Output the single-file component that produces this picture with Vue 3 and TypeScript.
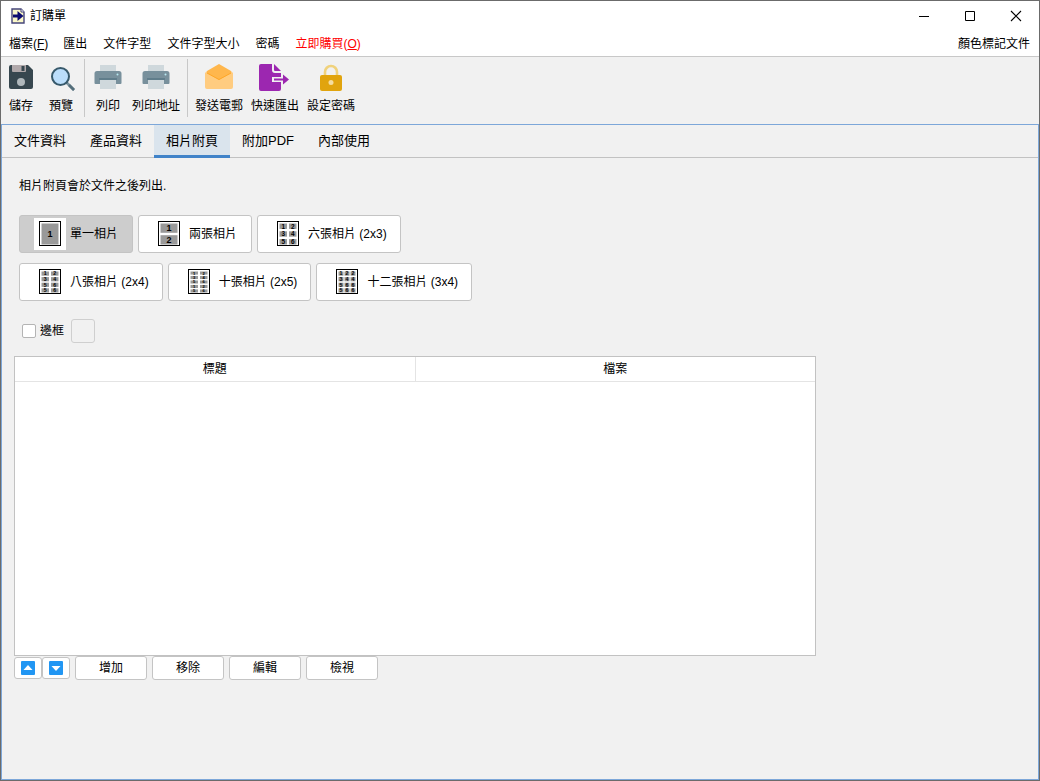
<script setup lang="ts">
import { ref } from 'vue'

interface Layout {
  label: string
  cols: number
  rows: number
  digits: string
}

const layoutRows: Layout[][] = [
  [
    { label: '單一相片', cols: 1, rows: 1, digits: '1' },
    { label: '兩張相片', cols: 1, rows: 2, digits: '12' },
    { label: '六張相片 (2x3)', cols: 2, rows: 3, digits: '123456' },
  ],
  [
    { label: '八張相片 (2x4)', cols: 2, rows: 4, digits: '12345656' },
    { label: '十張相片 (2x5)', cols: 2, rows: 5, digits: '1234561256' },
    { label: '十二張相片 (3x4)', cols: 3, rows: 4, digits: '122344566566' },
  ],
]

const tabs: string[] = ['文件資料', '產品資料', '相片附頁', '附加PDF', '內部使用']
const actions: string[] = ['增加', '移除', '編輯', '檢視']

const activeTab = ref('相片附頁')
const activeLayout = ref('單一相片')
const bordered = ref(false)

function cells(l: Layout) {
  const gapX = l.cols === 1 ? 0 : l.cols === 2 ? 2 : 1
  const gapY = l.rows < 4 ? 2.4 : 1.4
  const w = (17 - gapX * (l.cols - 1)) / l.cols
  const h = (21 - gapY * (l.rows - 1)) / l.rows
  return l.digits.split('').map((digit, i) => ({
    digit,
    x: 7.5 + (i % l.cols) * (w + gapX),
    y: 5.5 + Math.floor(i / l.cols) * (h + gapY),
    w,
    h,
    size: Math.min(9, h + 1),
  }))
}
</script>

<template>
  <div class="window">
    <header class="titlebar">
      <svg class="app-icon" width="14" height="16" viewBox="0 0 14 16">
        <path d="M1 1h9l3 3v11H1z" fill="#fbf8c8" stroke="#45457a" stroke-width="1.4" />
        <path d="M10 1v3h3" fill="#fff" stroke="#45457a" />
        <path d="M2 6.5h4.500V3l6 5-6 5V9.500H2z" fill="#0c0c70" />
      </svg>
      <h1>訂購單</h1>
      <div class="controls">
        <button aria-label="最小化"><svg width="12" height="12"><path d="M1 6.5h10" stroke="#000" /></svg></button>
        <button aria-label="最大化"><svg width="12" height="12"><path d="M1.5 1.5h9v9h-9z" fill="none" stroke="#000" /></svg></button>
        <button aria-label="關閉"><svg width="12" height="12"><path d="M1 1l10 10M11 1L1 11" stroke="#000" stroke-width="1.1" /></svg></button>
      </div>
    </header>

    <nav class="menubar">
      <button>檔案(<u>F</u>)</button>
      <button>匯出</button>
      <button>文件字型</button>
      <button>文件字型大小</button>
      <button>密碼</button>
      <button class="buy">立即購買(<u>O</u>)</button>
      <button class="last">顏色標記文件</button>
    </nav>

    <div class="toolbar">
      <div class="group first">
        <button>
          <svg width="24" height="28" viewBox="0 0 24 28">
            <path d="M2 2h17l5 5v17a2 2 0 0 1-2 2H2a2 2 0 0 1-2-2V4a2 2 0 0 1 2-2z" fill="#37474f" />
            <path d="M3 2h14v6a1 1 0 0 1-1 1H4a1 1 0 0 1-1-1z" fill="#b0a8aa" />
            <path d="M12.500 3h3v5h-3z" fill="#37474f" />
            <circle cx="12" cy="19" r="4" fill="#b0b8bc" />
          </svg>
          <span>儲存</span>
        </button>
        <button>
          <svg width="28" height="28" viewBox="0 0 28 28">
            <path d="M19 19l8 8" stroke="#78909c" stroke-width="2.600" />
            <path d="M22 22l5 5" stroke="#546e7a" stroke-width="2.600" />
            <circle cx="13.500" cy="13.500" r="8.500" fill="#bbdefb" stroke="#37596b" stroke-width="2" />
          </svg>
          <span>預覽</span>
        </button>
      </div>
      <div class="group print">
        <button v-for="name in ['列印', '列印地址']" :key="name">
          <svg width="28" height="28" viewBox="0 0 28 28">
            <path d="M6 2h16v8H6z" fill="#cfd8dc" />
            <path d="M3 8h22a2.500 2.500 0 0 1 2.500 2.500V20a1 1 0 0 1-1 1h-25a1 1 0 0 1-1-1v-9.500A2.500 2.500 0 0 1 3 8z" fill="#78909c" />
            <path d="M6 16h16v10H6z" fill="#cfd8dc" />
            <path d="M5 15h18v2H5z" fill="#607d8b" />
            <circle cx="23.500" cy="11.500" r="1" fill="#b8e8f0" />
          </svg>
          <span>{{ name }}</span>
        </button>
      </div>
      <div class="group send">
        <button>
          <svg width="28" height="28" viewBox="0 0 28 28">
            <path d="M0 10l2-2h24l2 2v14a2 2 0 0 1-2 2H2a2 2 0 0 1-2-2z" fill="#ffcc80" />
            <path d="M14 1l12 7v2l-12 7-12-7V8z" fill="#ffb74d" />
            <path d="M2 10l12 6.500L26 10" fill="none" stroke="#ffa726" />
          </svg>
          <span>發送電郵</span>
        </button>
        <button>
          <svg width="32" height="28" viewBox="0 0 32 28">
            <path d="M2 1h11v6a3 3 0 0 0 3 3h6v4h-9v5h9v7a2 2 0 0 1-2 2H2a2 2 0 0 1-2-2V3a2 2 0 0 1 2-2z" fill="#9c27b0" />
            <path d="M15 1l7 7h-6a1 1 0 0 1-1-1z" fill="#9c27b0" />
            <path d="M15 15.500h9v-4l6 5-6 5v-4h-9z" fill="#9c27b0" />
          </svg>
          <span>快速匯出</span>
        </button>
        <button>
          <svg width="24" height="28" viewBox="0 0 24 28">
            <path d="M6 13V9a6 6 0 0 1 12 0v4" fill="none" stroke="#f0d27c" stroke-width="2.600" />
            <rect x="1" y="12" width="22" height="16" rx="2" fill="#e1a40e" />
            <circle cx="12" cy="19.500" r="2.500" fill="#f5dda0" />
          </svg>
          <span>設定密碼</span>
        </button>
      </div>
    </div>

    <main class="pane">
      <div class="tabs" role="tablist">
        <button
          v-for="tab in tabs"
          :key="tab"
          role="tab"
          :aria-selected="tab === activeTab"
          :class="{ active: tab === activeTab }"
          @click="activeTab = tab"
        >{{ tab }}</button>
      </div>

      <section class="content">
        <p>相片附頁會於文件之後列出.</p>

        <div class="layouts">
          <div v-for="(row, r) in layoutRows" :key="r" class="layout-row">
            <button
              v-for="item in row"
              :key="item.label"
              :class="{ selected: item.label === activeLayout }"
              @click="activeLayout = item.label"
            >
              <svg width="32" height="32" viewBox="0 0 32 32" aria-hidden="true">
                <rect width="32" height="32" fill="#fff" />
                <rect x="5.500" y="3.500" width="21" height="24" fill="#fff" stroke="#000" />
                <g v-for="(c, i) in cells(item)" :key="i">
                  <rect :x="c.x" :y="c.y" :width="c.w" :height="c.h" fill="#999" />
                  <text
                    :x="c.x + c.w / 2"
                    :y="c.y + c.h / 2 + c.size * 0.36"
                    :font-size="c.size"
                    text-anchor="middle"
                  >{{ c.digit }}</text>
                </g>
              </svg>
              <span>{{ item.label }}</span>
            </button>
          </div>
        </div>

        <div class="frame-option">
          <label><input v-model="bordered" type="checkbox" />邊框</label>
          <button class="swatch" aria-label="邊框顏色" disabled></button>
        </div>

        <div class="list">
          <table>
            <thead>
              <tr><th>標題</th><th>檔案</th></tr>
            </thead>
          </table>
        </div>

        <div class="actions">
          <button class="move" aria-label="上移">
            <svg width="14" height="14"><rect width="14" height="14" rx="1" fill="#2196f3" /><path d="M2.500 9L7 4l4.500 5z" fill="#fff" /></svg>
          </button>
          <button class="move" aria-label="下移">
            <svg width="14" height="14"><rect width="14" height="14" rx="1" fill="#2196f3" /><path d="M2.500 5L7 10l4.500-5z" fill="#fff" /></svg>
          </button>
          <div class="edit">
            <button v-for="action in actions" :key="action">{{ action }}</button>
          </div>
        </div>
      </section>
    </main>
  </div>
</template>

<style>
body {
  margin: 0;
}
</style>

<style scoped>
.window {
  display: flex;
  flex-direction: column;
  box-sizing: border-box;
  min-height: 100vh;
  border: 1px solid #6b6b6b;
  background: #f1f1f1;
  color: #000;
  font: 12px/16px "Liberation Sans", "Noto Sans CJK TC", sans-serif;
}
button {
  margin: 0;
  padding: 0;
  border: 0;
  background: none;
  color: inherit;
  font: inherit;
  white-space: nowrap;
}
svg {
  display: block;
  flex: none;
}
.titlebar {
  display: flex;
  align-items: center;
  height: 30px;
  background: #fff;
}
.app-icon {
  margin: 0 5px 0 10px;
}
h1 {
  margin: 0;
  font-size: 12px;
  font-weight: 400;
}
.controls {
  display: flex;
  margin-left: auto;
}
.controls button {
  display: flex;
  align-items: center;
  justify-content: center;
  width: 46px;
  height: 30px;
}
.menubar {
  display: flex;
  align-items: center;
  height: 25px;
  padding: 0 1px 0 0;
  border-bottom: 1px solid #c8c8c8;
  background: #fff;
}
.menubar button {
  padding: 0 8px;
}
.menubar button:first-child {
  padding-right: 7px;
}
.menubar .buy {
  color: #f00;
}
.menubar .last {
  margin-left: auto;
}
.toolbar {
  display: flex;
  align-items: flex-start;
  height: 65px;
  padding-top: 2px;
}
.group {
  display: flex;
  height: 58px;
}
.group + .group {
  border-left: 1px solid #c8c8c8;
}
.toolbar button {
  display: flex;
  flex-direction: column;
  align-items: center;
  gap: 7px;
  padding: 4px 4px 0;
}
.toolbar svg {
  margin: 0 -2px;
}
.first {
  gap: 8px;
  padding: 0 7px 0 4px;
}
.print {
  gap: 4px;
  padding: 0 3px 0 7px;
}
.send {
  padding-left: 3px;
}
.pane {
  flex: 1;
  border: 1px solid #7da7d9;
}
.tabs {
  display: flex;
  height: 32px;
  border-bottom: 1px solid #c2c2c2;
}
.tabs button {
  box-sizing: border-box;
  height: 33px;
  padding: 2px 12px 0;
  border-bottom: 3px solid transparent;
  font-size: 13px;
}
.tabs .active {
  border-color: #4083c9;
  background: #dae4ed;
}
.content {
  padding: 20px 222px 20px 12px;
}
p {
  margin: 0 0 21px 5px;
}
.layouts {
  display: flex;
  flex-direction: column;
  gap: 10px;
  margin-left: 5px;
}
.layout-row {
  display: flex;
  gap: 5px;
}
.layout-row button,
.actions button {
  display: flex;
  align-items: center;
  justify-content: center;
  box-sizing: border-box;
  border: 1px solid #c4c4c4;
  border-radius: 3px;
  background: #fff;
}
.layout-row button {
  justify-content: flex-start;
  gap: 4px;
  min-width: 114px;
  height: 38px;
  padding: 0 13px 0 14px;
}
.layout-row .selected {
  background: #cdcdcd;
}
.layout-row text {
  font-family: "Liberation Sans", sans-serif;
  font-weight: 700;
}
.frame-option {
  display: flex;
  align-items: center;
  gap: 7px;
  margin: 18px 0 13px 8px;
}
label {
  display: flex;
  align-items: center;
  gap: 4px;
}
input {
  appearance: none;
  box-sizing: border-box;
  width: 14px;
  height: 14px;
  margin: 0;
  border: 1px solid #b4b4b4;
  border-radius: 2px;
  background: #fff;
}
input:checked {
  background: #4083c9;
}
.swatch {
  box-sizing: border-box;
  width: 24px;
  height: 24px;
  border: 1px solid #cfcfcf;
  border-radius: 3px;
}
.list {
  box-sizing: border-box;
  height: 300px;
  border: 1px solid #c2c2c2;
  background: #fff;
}
table {
  width: 100%;
  border-collapse: collapse;
  table-layout: fixed;
}
th {
  height: 24px;
  padding: 0;
  border-bottom: 1px solid #e4e4e4;
  font-weight: 400;
}
th + th {
  border-left: 1px solid #e4e4e4;
}
.actions {
  display: flex;
  align-items: center;
}
.actions .move {
  width: 28px;
  height: 22px;
}
.edit {
  display: flex;
  gap: 5px;
  margin-left: 5px;
}
.edit button {
  width: 72px;
  height: 24px;
}
</style>
